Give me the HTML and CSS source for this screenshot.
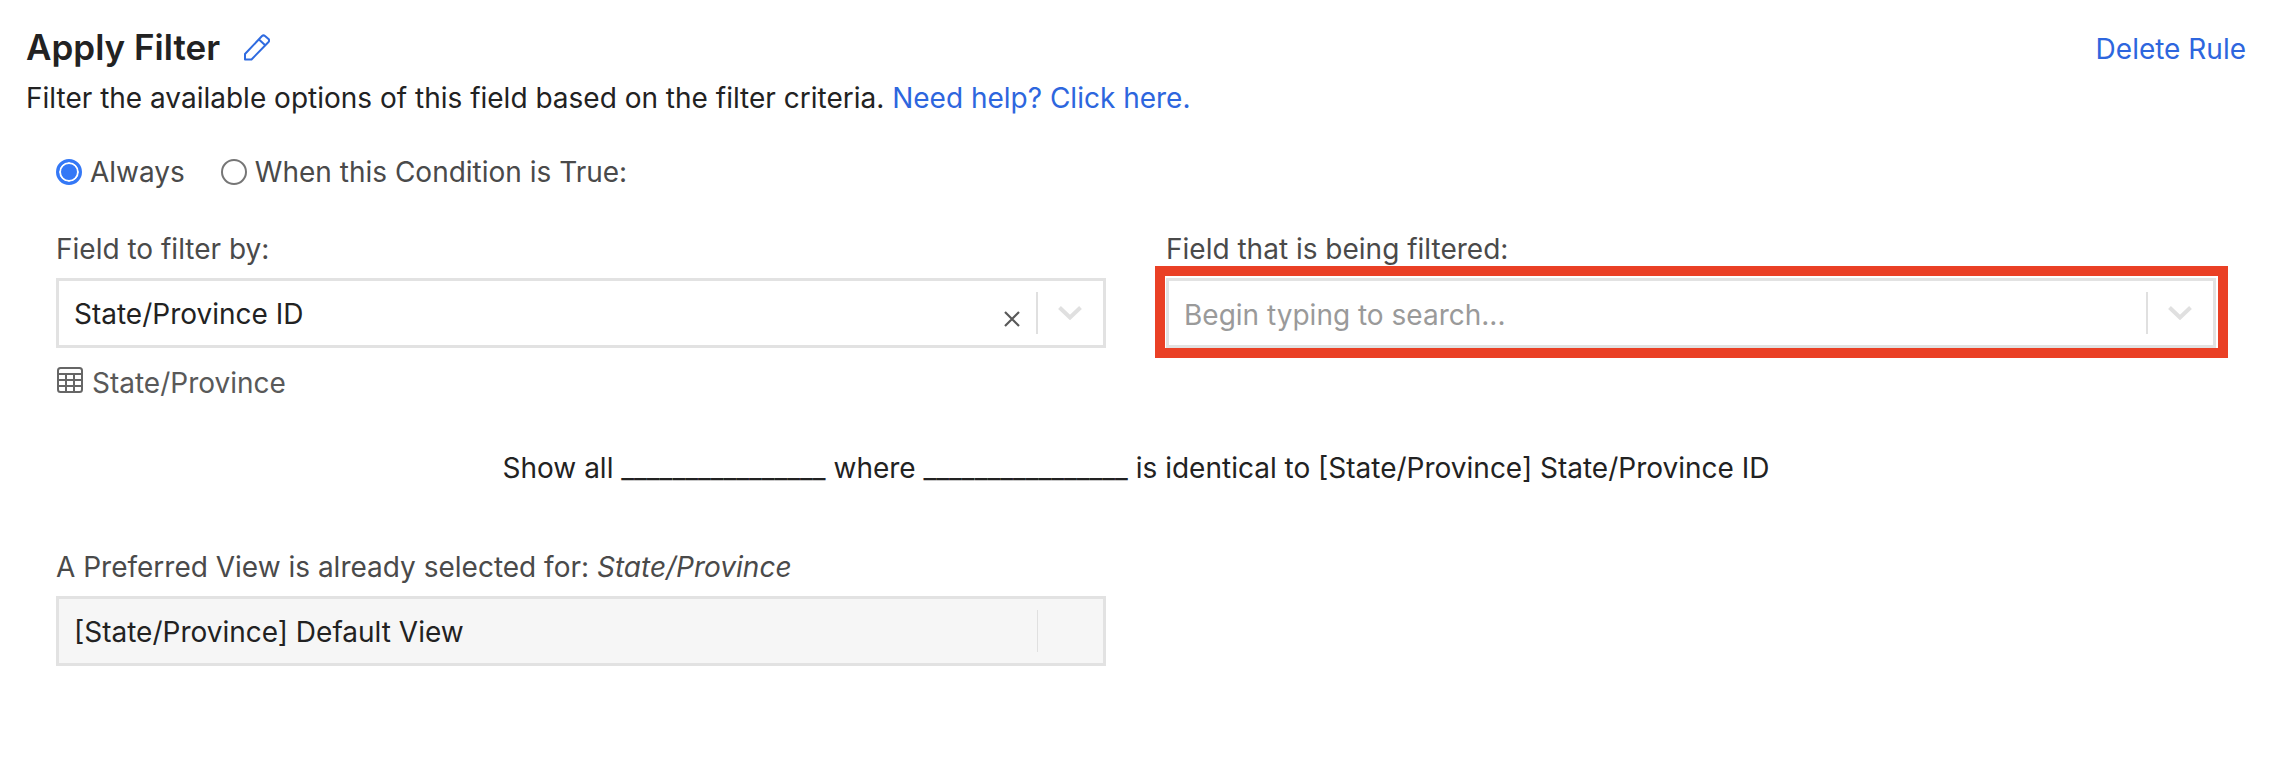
FILE: index.html
```html
<!DOCTYPE html>
<html>
<head>
<link rel="stylesheet" href="styles.css">
</head>
<body>
    <div class="header">
        <div class="title-group">
            <h1 class="title">Apply Filter</h1>
            <svg class="pencil" width="26" height="27" viewBox="0 0 26 27" fill="none" stroke="#2f6be0" stroke-width="2" stroke-linejoin="round">
                <path d="M1 20 L18 2 Q19.5 0.8 21 2 L24.5 5 Q25.8 6.5 24.5 8 L7.5 25.5 L1 25.5 Z"/>
                <path d="M15 5.5 L21.5 11.5"/>
            </svg>
        </div>
        <a class="link" href="#">Delete Rule</a>
    </div>
    <p class="desc">Filter the available options of this field based on the filter criteria. <a class="link" href="#">Need help? Click here.</a></p>

    <div class="form">
        <div class="radios">
            <label class="radio-item"><input class="radio" type="radio" name="when" checked>Always</label>
            <label class="radio-item"><input class="radio" type="radio" name="when">When this Condition is True:</label>
        </div>

        <div class="fields">
            <div>
                <div class="label">Field to filter by:</div>
                <div class="select">
                    <span class="select-value">State/Province ID</span>
                    <svg class="clear" width="16" height="16" viewBox="0 0 16 16" fill="none" stroke="#595959" stroke-width="2.2"><path d="M1 1 L15 15 M15 1 L1 15"/></svg>
                    <span class="divider"></span>
                    <svg class="chevron" width="24" height="14" viewBox="0 0 24 14" fill="none" stroke="#e0e0e0" stroke-width="4"><path d="M1.5 1.5 L12 11.5 L22.5 1.5"/></svg>
                </div>
                <div class="caption">
                    <svg class="caption-icon" width="26" height="26" viewBox="0 0 26 26" fill="none" stroke="#666" stroke-width="2"><rect x="1" y="1" width="24" height="24" rx="2.5"/><path d="M1 7 H25 M1 13 H25 M1 19 H25 M9 7 V25 M17 7 V25"/></svg>
                    State/Province
                </div>
            </div>
            <div>
                <div class="label">Field that is being filtered:</div>
                <div class="select">
                    <span class="select-value placeholder">Begin typing to search...</span>
                    <span class="divider"></span>
                    <svg class="chevron" width="24" height="14" viewBox="0 0 24 14" fill="none" stroke="#e0e0e0" stroke-width="4"><path d="M1.5 1.5 L12 11.5 L22.5 1.5"/></svg>
                    <span class="annotation"></span>
                </div>
            </div>
        </div>
    </div>

    <p class="summary">Show all ________________ where ________________ is identical to [State/Province] State/Province ID</p>

    <div class="form">
        <div class="label preferred">A Preferred View is already selected for: <em>State/Province</em></div>
        <div class="select disabled">
            <span class="select-value">[State/Province] Default View</span>
            <span class="divider thin"></span>
        </div>
    </div>
</body>
</html>
```

FILE: styles.css
```css
body {
    margin: 0;
    background: #fff;
    color: #222;
    font-family: Inter, "Liberation Sans", sans-serif;
    font-size: 28px;
    line-height: 36px;
}
.link {
    color: #2d66de;
    text-decoration: none;
}
.header {
    display: flex;
    justify-content: space-between;
    align-items: flex-end;
    padding: 27px 26px 0;
    height: 40px;
}
.title-group {
    display: flex;
    align-items: center;
    gap: 24px;
}
.title {
    margin: 0;
    font-size: 35px;
    line-height: 40px;
    font-weight: 600;
}
.desc {
    margin: 13px 26px 0;
}
.form {
    width: 2160px;
    margin-left: 56px;
}
.radios {
    display: flex;
    gap: 36px;
    margin-top: 38px;
    color: #4a4a4a;
}
.radio-item {
    display: flex;
    align-items: center;
    gap: 8px;
}
.radio {
    appearance: none;
    width: 26px;
    height: 26px;
    margin: 0 0 1px;
    border: 2px solid #767676;
    border-radius: 50%;
    background: #fff;
}
.radio:checked {
    border: 3px solid #3478f6;
    box-shadow: inset 0 0 0 2px #fff;
    background: #3478f6;
}
.fields {
    display: grid;
    grid-template-columns: 1050px 1050px;
    gap: 60px;
    margin-top: 41px;
}
.label {
    color: #4a4a4a;
    margin-bottom: 11px;
}
.select {
    position: relative;
    display: flex;
    align-items: center;
    box-sizing: border-box;
    width: 1050px;
    height: 70px;
    border: 3px solid #e2e2e2;
    background: #fff;
}
.select-value {
    flex: 1;
    padding: 2px 0 0 15px;
}
.placeholder {
    color: #9a9a9a;
    padding-top: 3px;
}
.clear {
    margin-top: 12px;
}
.divider {
    width: 2px;
    height: 42px;
    margin-left: 16px;
    background: #e0e0e0;
}
.chevron {
    margin: 0 21px 0 20px;
}
.annotation {
    position: absolute;
    top: -15px;
    left: -14px;
    right: -15px;
    bottom: -13px;
    border: 10px solid #ea4025;
    pointer-events: none;
}
.caption {
    display: flex;
    align-items: center;
    gap: 9px;
    margin-top: 17px;
    padding-left: 1px;
    color: #595959;
}
.caption-icon {
    margin-bottom: 6px;
}
.summary {
    margin: 49px 0 0;
    text-align: center;
}
.preferred {
    margin-top: 63px;
    margin-bottom: 11px;
}
.disabled {
    background: #f6f6f6;
}
.thin {
    width: 1px;
    margin-right: 65px;
}
```
